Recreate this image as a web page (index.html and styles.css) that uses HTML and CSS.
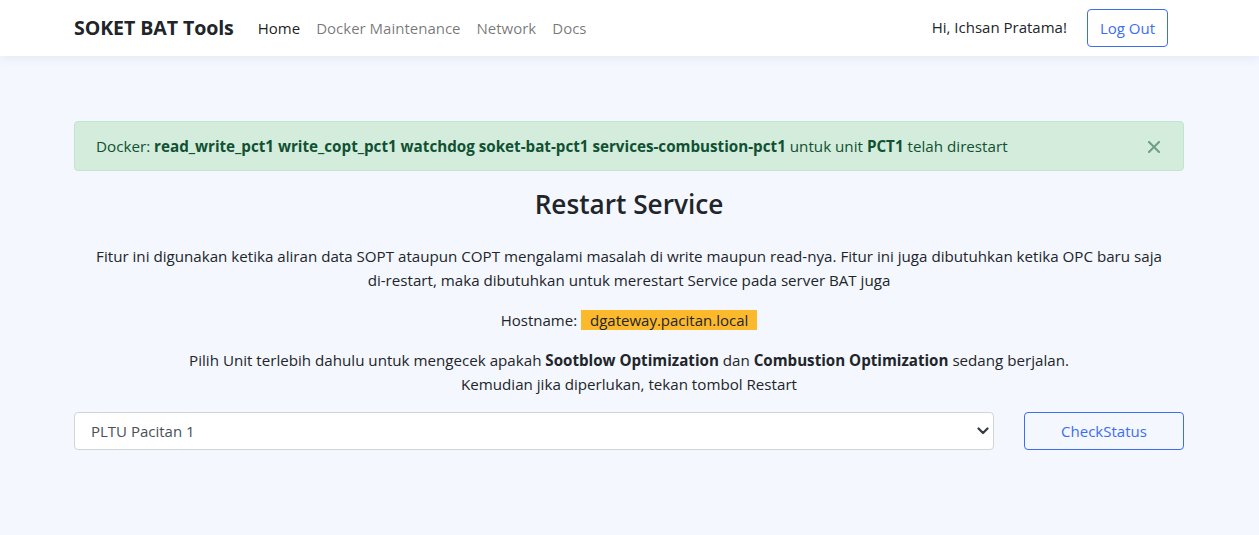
FILE: index.html
```html
<!DOCTYPE html>
<html lang="id">
<head>
<meta charset="utf-8">
<title>SOKET BAT Tools</title>
<link rel="stylesheet" href="styles.css">
</head>
<body>
<nav class="navbar">
  <div class="container nav-inner">
    <a class="brand" href="#">SOKET BAT Tools</a>
    <ul class="nav-links">
      <li><a class="nav-link active" href="#">Home</a></li>
      <li><a class="nav-link" href="#">Docker Maintenance</a></li>
      <li><a class="nav-link" href="#">Network</a></li>
      <li><a class="nav-link" href="#">Docs</a></li>
    </ul>
    <div class="nav-right">
      <span class="greeting">Hi, Ichsan Pratama!</span>
      <button class="btn btn-outline logout">Log Out</button>
    </div>
  </div>
</nav>
<main class="container main">
  <div class="alert">
    <span>Docker: <strong>read_write_pct1 write_copt_pct1 watchdog soket-bat-pct1 services-combustion-pct1</strong> untuk unit <strong>PCT1</strong> telah direstart</span>
    <button class="btn-close" aria-label="Close">
      <svg width="12" height="12" viewBox="0 0 12 12"><path d="M1 1L11 11M11 1L1 11" stroke="currentColor" stroke-width="2" stroke-linecap="square"/></svg>
    </button>
  </div>
  <h2 class="title">Restart Service</h2>
  <p class="desc">Fitur ini digunakan ketika aliran data SOPT ataupun COPT mengalami masalah di write maupun read-nya. Fitur ini juga dibutuhkan ketika OPC baru saja <span class="nowrap">di-restart,</span> maka dibutuhkan untuk merestart Service pada server BAT juga</p>
  <p class="host">Hostname: <span class="host-badge">dgateway.pacitan.local</span></p>
  <p class="desc">Pilih Unit terlebih dahulu untuk mengecek apakah <strong>Sootblow Optimization</strong> dan <strong>Combustion Optimization</strong> sedang berjalan.<br>Kemudian jika diperlukan, tekan tombol Restart</p>
  <div class="row">
    <div class="col-select">
      <div class="select-wrap">
        <select class="form-select">
          <option>PLTU Pacitan 1</option>
          <option>PLTU Pacitan 2</option>
        </select>
        <svg class="chevron" width="12" height="8" viewBox="0 0 12 8"><path d="M1.5 1.5L6 6L10.5 1.5" fill="none" stroke="#343a40" stroke-width="2.2" stroke-linecap="round" stroke-linejoin="round"/></svg>
      </div>
    </div>
    <div class="col-btn">
      <button class="btn btn-outline block">CheckStatus</button>
    </div>
  </div>
</main>
</body>
</html>
```
FILE: styles.css
```css
* { box-sizing: border-box; }
html, body { margin: 0; padding: 0; }
body {
  font-family: "Open Sans", "Noto Sans", "Liberation Sans", sans-serif;
  font-size: 15px;
  line-height: 24px;
  color: #212529;
  background: #f4f7fe;
  min-height: 535px;
}
.container {
  max-width: 1140px;
  margin: 0 auto;
  padding: 0 15.5px 0 14.5px;
}
.navbar {
  background: #fff;
  height: 56px;
  box-shadow: 0 2px 10px rgba(40, 60, 120, 0.08);
  position: relative;
}
.nav-inner {
  display: flex;
  align-items: center;
  height: 56px;
}
.brand {
  font-size: 19.6px;
  font-weight: 700;
  color: #212529;
  text-decoration: none;
  margin-right: 16px;
  letter-spacing: -0.1px;
}
.nav-links {
  display: flex;
  list-style: none;
  margin: 0;
  padding: 0;
}
.nav-link {
  display: block;
  padding: 8px;
  color: rgba(0, 0, 0, 0.55);
  text-decoration: none;
}
.nav-link.active { color: rgba(0, 0, 0, 0.9); }
.nav-right {
  margin-left: auto;
  display: flex;
  align-items: center;
  gap: 20px;
  padding-right: 16px;
}
.greeting { margin-top: -3px; }
.btn {
  font-family: inherit;
  font-size: 15px;
  line-height: 24px;
  padding: 6px 12px;
  border-radius: 4px;
  background: transparent;
  cursor: pointer;
}
.btn-outline {
  border: 1px solid #3b6ef3;
  color: #3b6ef3;
}
.logout { height: 38px; }
.main { padding-top: 65px; }
.alert {
  display: flex;
  align-items: center;
  background: #d4ecdc;
  border: 1px solid #c3e4cd;
  color: #0f5132;
  border-radius: 4px;
  padding: 12px 20px 12px 21px;
  min-height: 50px;
  font-size: 15.2px;
}
.alert strong { font-weight: 700; }
.btn-close {
  margin-left: auto;
  margin-right: 3px;
  border: 0;
  background: transparent;
  color: #0f5132;
  opacity: 0.5;
  padding: 0;
  display: flex;
  margin-top: 2px;
}
.title {
  text-align: center;
  font-size: 26.2px;
  font-weight: 600;
  line-height: 34px;
  margin: 16px 0 23px;
}
.desc {
  text-align: center;
  margin: 0 0 16px;
  font-size: 15.15px;
}
.nowrap { white-space: nowrap; }
.host {
  text-align: center;
  margin: 0 0 16px;
}
.host-badge {
  background: #fcb92c;
  padding: 0 9px;
  display: inline-block;
  line-height: 20px;
}
.row {
  display: flex;
  margin: 0 -15px;
}
.col-select { flex: 0 0 83.3333%; padding: 0 15px; }
.col-btn { flex: 0 0 16.6667%; padding: 0 15px; }
.select-wrap { position: relative; }
.form-select {
  appearance: none;
  -webkit-appearance: none;
  width: 100%;
  height: 38px;
  font-family: inherit;
  font-size: 15px;
  color: #495057;
  background: #fff;
  border: 1px solid #ced4da;
  border-radius: 4px;
  padding: 6px 32px 6px 16px;
}
.chevron {
  position: absolute;
  right: 5px;
  top: 15px;
  pointer-events: none;
}
.block { width: 100%; height: 38px; }
```
